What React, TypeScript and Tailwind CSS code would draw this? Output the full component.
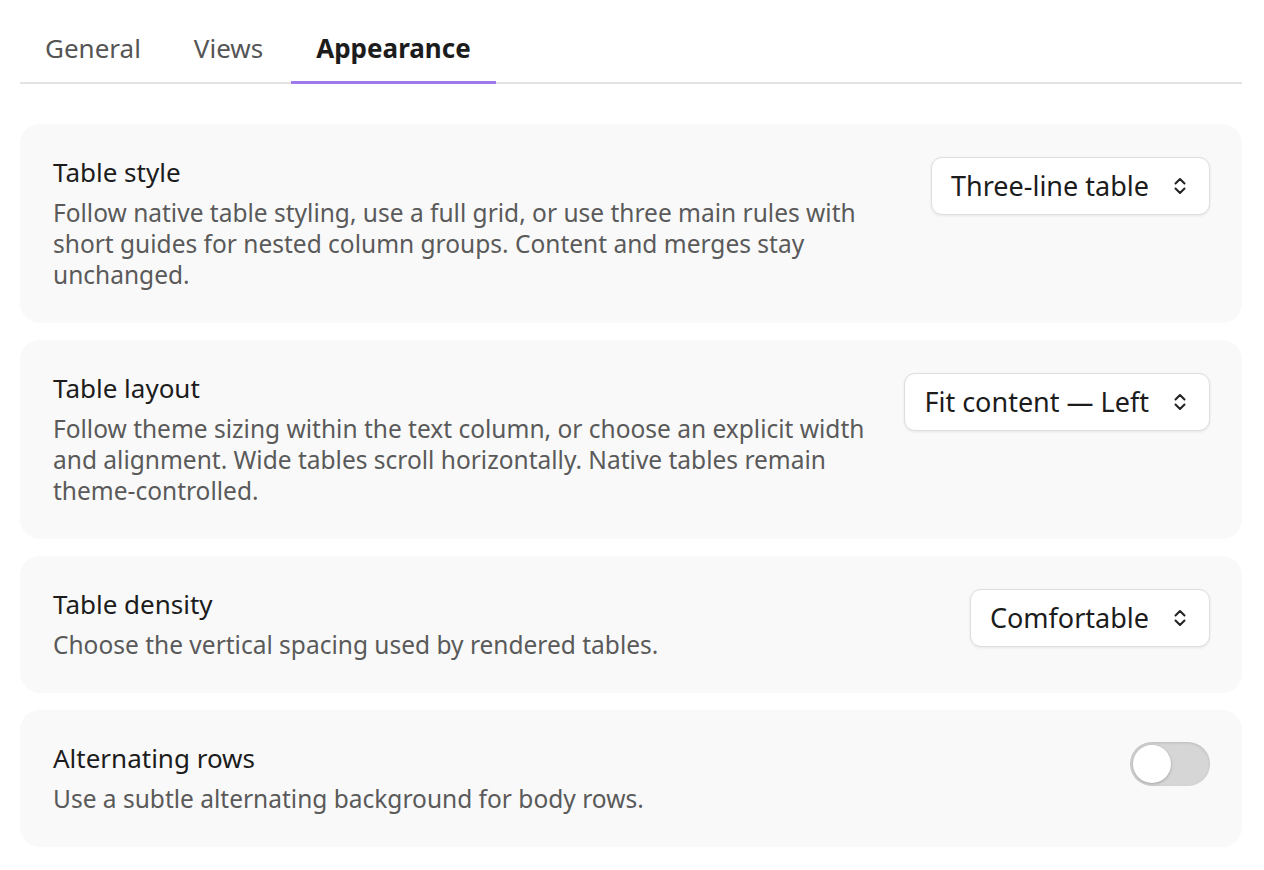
import { useState } from "react";

// Settings → Appearance tab (table rendering options).
const font = { fontFamily: '"Noto Sans", "Open Sans", sans-serif' };

function Chevrons() {
  return (
    <svg width="14" height="20" viewBox="0 0 14 20" fill="none" stroke="#222" strokeWidth="2" strokeLinecap="round" strokeLinejoin="round">
      <path d="M2.5 7.5 7 3l4.5 4.5" />
      <path d="M2.5 12.5 7 17l4.5-4.5" />
    </svg>
  );
}

function Select({ value }: { value: string }) {
  return (
    <button className="mt-[1px] flex h-[58px] shrink-0 items-center gap-[24px] rounded-[11px] border border-[#dedede] bg-white pl-[19px] pr-[22px] text-[27px] text-[#1c1c1c] shadow-[0_1px_3px_rgba(0,0,0,0.08)]">
      <span>{value}</span>
      <Chevrons />
    </button>
  );
}

function Toggle() {
  const [on, setOn] = useState(false);
  return (
    <button
      onClick={() => setOn(!on)}
      className="relative h-[44px] w-[80px] shrink-0 rounded-full bg-[#d6d6d6] shadow-[inset_0_1px_3px_rgba(0,0,0,0.12)]"
    >
      <span
        className={
          "absolute top-[3px] h-[38px] w-[38px] rounded-full bg-white shadow-[0_1px_3px_rgba(0,0,0,0.25)] transition-all " +
          (on ? "left-[39px]" : "left-[3px]")
        }
      />
    </button>
  );
}

function Row({ title, desc, control }: { title: string; desc: string; control: React.ReactNode }) {
  return (
    <div className="flex items-start gap-[32px] rounded-[20px] bg-[#f9f9f9] pb-[33px] pl-[33px] pr-[32px] pt-[32px]">
      <div className="flex-1">
        <div className="text-[26px] leading-[32px] text-[#1c1c1c]">{title}</div>
        <p className="mt-[9px] text-[24.5px] leading-[31px] text-[#5a5a5a]">{desc}</p>
      </div>
      {control}
    </div>
  );
}

export default function App() {
  const tabs = ["General", "Views", "Appearance"];
  return (
    <div style={font} className="min-h-screen bg-white pl-[20px] pr-[22px] pt-[16px]">
      <div className="flex gap-[3px] border-b-2 border-[#e3e3e3]">
        {tabs.map((t) => {
          const active = t === "Appearance";
          return (
            <div
              key={t}
              className={
                "-mb-[2px] px-[25px] pb-[13px] pt-[12px] text-[26px] leading-[40px] " +
                (active ? "border-b-[3px] border-[#9f7aea] font-bold text-[#1c1c1c]" : "border-b-[3px] border-transparent text-[#555]")
              }
            >
              {t}
            </div>
          );
        })}
      </div>

      <div className="mt-[40px] flex flex-col gap-[17px]">
        <Row
          title="Table style"
          desc="Follow native table styling, use a full grid, or use three main rules with short guides for nested column groups. Content and merges stay unchanged."
          control={<Select value="Three-line table" />}
        />
        <Row
          title="Table layout"
          desc="Follow theme sizing within the text column, or choose an explicit width and alignment. Wide tables scroll horizontally. Native tables remain theme-controlled."
          control={<Select value="Fit content — Left" />}
        />
        <Row
          title="Table density"
          desc="Choose the vertical spacing used by rendered tables."
          control={<Select value="Comfortable" />}
        />
        <Row
          title="Alternating rows"
          desc="Use a subtle alternating background for body rows."
          control={<Toggle />}
        />
      </div>
    </div>
  );
}
